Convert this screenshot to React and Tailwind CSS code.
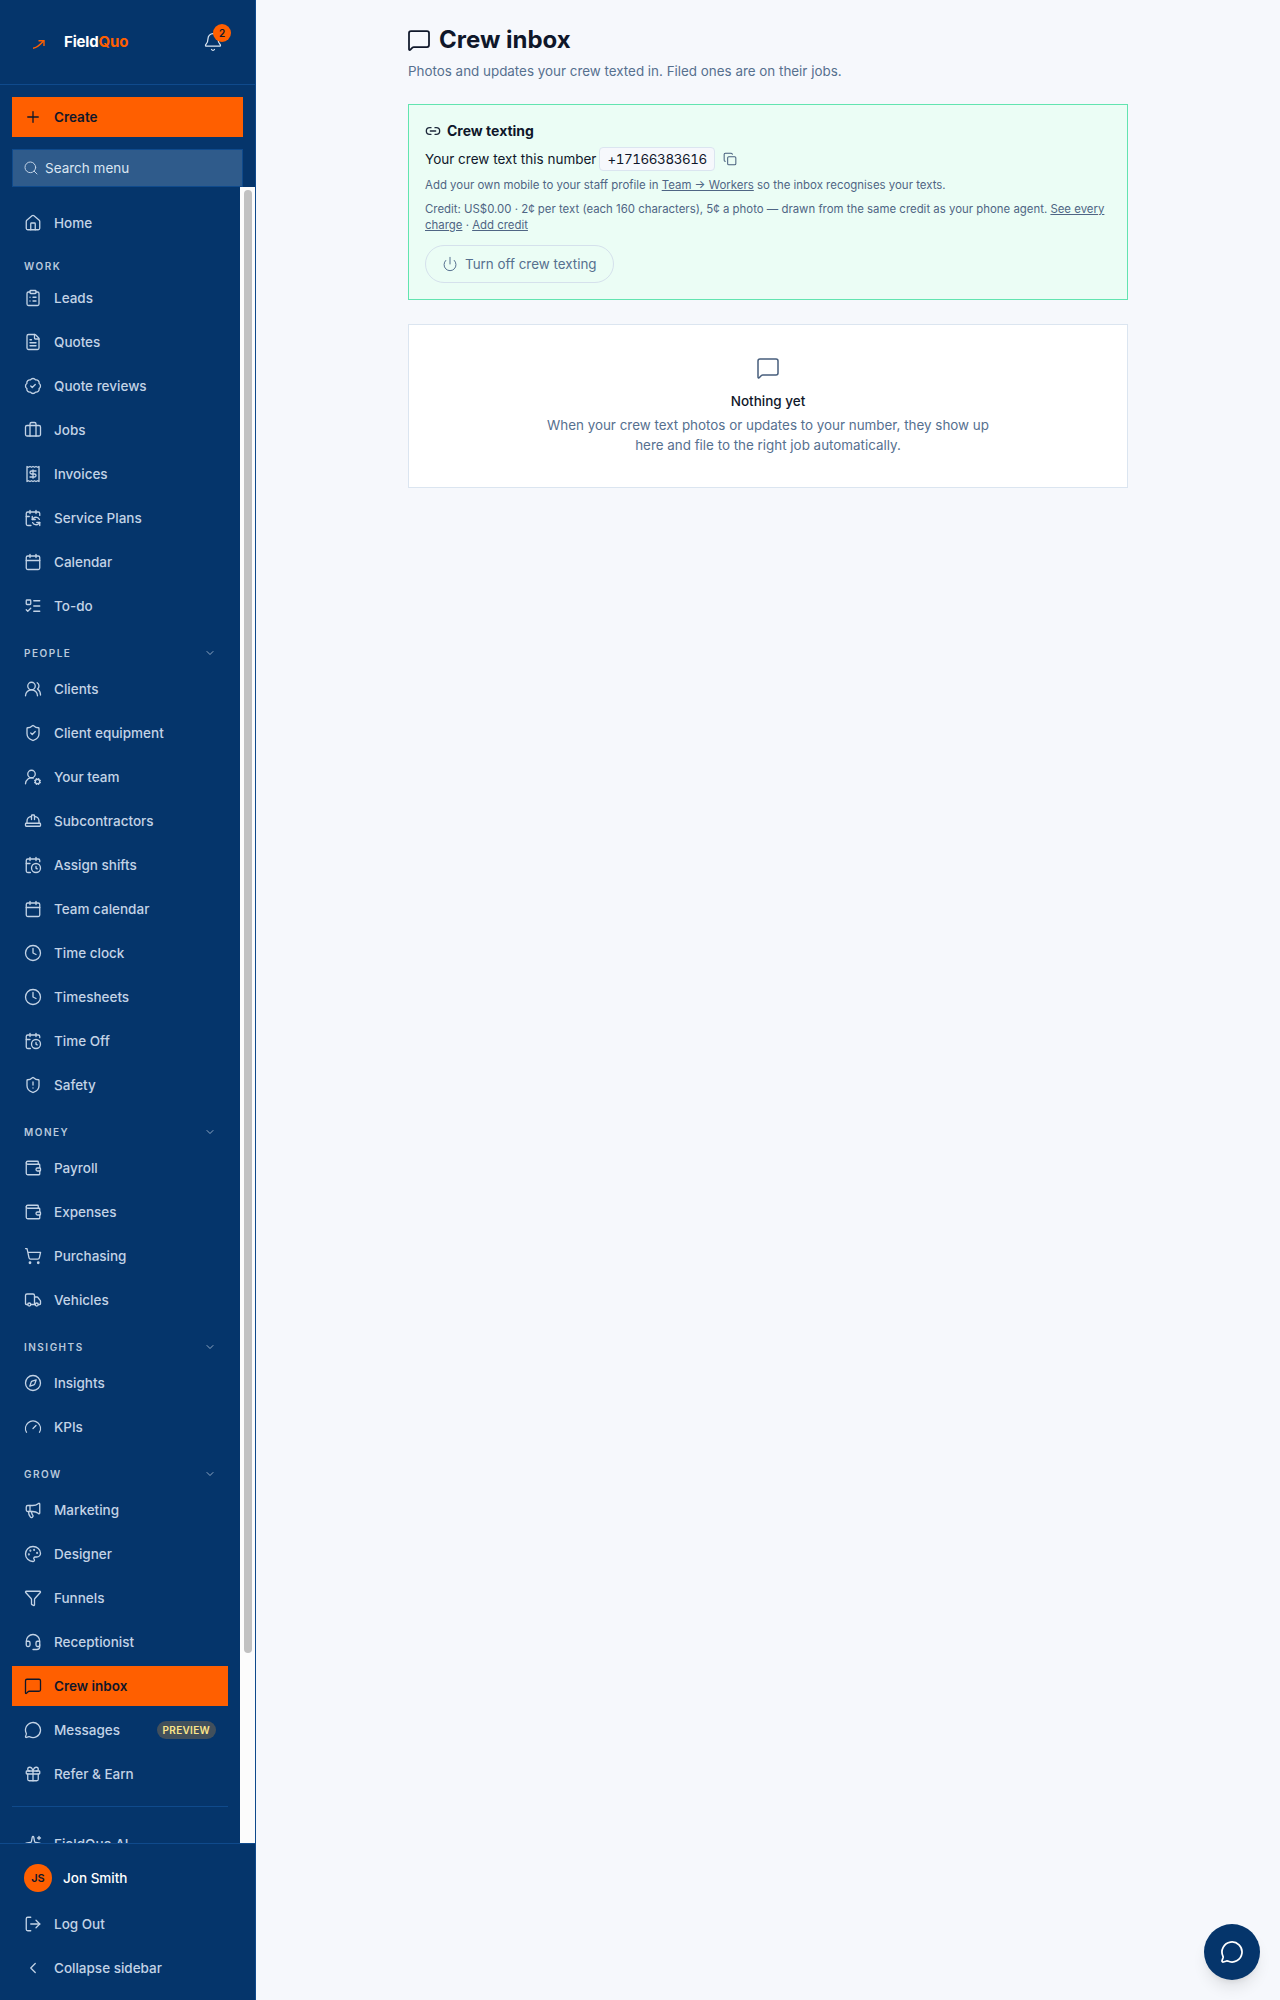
import React from 'react';
import {
    Bell, Plus, Search, House, ClipboardList, FileText, BadgeCheck, Briefcase, Receipt, CalendarSync, Calendar,
    ListTodo, ChevronDown, ChevronLeft, UsersRound, ShieldCheck, UserRoundCog, HardHat, CalendarClock, Clock,
    ShieldAlert, Wallet, ShoppingCart, Truck, Compass, Gauge, Megaphone, Palette, Funnel, Headset, MessageSquare,
    MessageCircle, Gift, Sparkles, LogOut, Link2, Copy, Power
} from 'lucide-react';

const sections = [
    { items: [{ name: 'Home', icon: House }] },
    {
        label: 'WORK',
        items: [
            { name: 'Leads', icon: ClipboardList },
            { name: 'Quotes', icon: FileText },
            { name: 'Quote reviews', icon: BadgeCheck },
            { name: 'Jobs', icon: Briefcase },
            { name: 'Invoices', icon: Receipt },
            { name: 'Service Plans', icon: CalendarSync },
            { name: 'Calendar', icon: Calendar },
            { name: 'To-do', icon: ListTodo }
        ]
    },
    {
        label: 'PEOPLE',
        collapsible: true,
        items: [
            { name: 'Clients', icon: UsersRound },
            { name: 'Client equipment', icon: ShieldCheck },
            { name: 'Your team', icon: UserRoundCog },
            { name: 'Subcontractors', icon: HardHat },
            { name: 'Assign shifts', icon: CalendarClock },
            { name: 'Team calendar', icon: Calendar },
            { name: 'Time clock', icon: Clock },
            { name: 'Timesheets', icon: Clock },
            { name: 'Time Off', icon: CalendarClock },
            { name: 'Safety', icon: ShieldAlert }
        ]
    },
    {
        label: 'MONEY',
        collapsible: true,
        items: [
            { name: 'Payroll', icon: Wallet },
            { name: 'Expenses', icon: Wallet },
            { name: 'Purchasing', icon: ShoppingCart },
            { name: 'Vehicles', icon: Truck }
        ]
    },
    {
        label: 'INSIGHTS',
        collapsible: true,
        items: [
            { name: 'Insights', icon: Compass },
            { name: 'KPIs', icon: Gauge }
        ]
    },
    {
        label: 'GROW',
        collapsible: true,
        items: [
            { name: 'Marketing', icon: Megaphone },
            { name: 'Designer', icon: Palette },
            { name: 'Funnels', icon: Funnel },
            { name: 'Receptionist', icon: Headset },
            { name: 'Crew inbox', icon: MessageSquare, active: true },
            { name: 'Messages', icon: MessageCircle, badge: 'PREVIEW' },
            { name: 'Refer & Earn', icon: Gift }
        ]
    }
];

function NavItem({ item }) {
    const Icon = item.icon;
    return (
        <a className={`flex items-center gap-3 h-10 px-3 text-[13.5px] ${item.active ? 'bg-[#ff5f00] text-[#0f172a] font-semibold' : 'text-[#c3d3e6] font-medium'}`}>
            <Icon className="w-[18px] h-[18px] shrink-0" strokeWidth={1.75} />
            <span className="flex-1">{item.name}</span>
            {item.badge && (
                <span className="rounded-full bg-[#42505c] text-[#fde68a] text-[10px] font-semibold tracking-[0.03em] leading-[18px] px-1.5">
                    {item.badge}
                </span>
            )}
        </a>
    );
}

function Sidebar() {
    return (
        <aside className="w-64 h-[2000px] shrink-0 bg-[#05356b] border-r border-[#0f4a8c] flex flex-col">
            {/* Logo */}
            <div className="h-[85px] shrink-0 border-b border-[#0f4a8c] flex items-center justify-between pl-[33px] pr-[32px]">
                <div className="flex items-center">
                    <svg className="w-[12px] h-[9px] mt-1" viewBox="0 0 12 9" fill="none" stroke="#ff5f00" strokeWidth="1.4">
                        <path d="M0 8.2 C3.5 8 6 6 10.5 1" />
                        <path d="M5.5 0.7 H11 V6" />
                    </svg>
                    <span className="ml-[19px] text-[15px] font-bold tracking-[-0.01em] text-white">
                        Field<span className="text-[#ff5f00]">Quo</span>
                    </span>
                </div>
                <div className="relative">
                    <Bell className="w-5 h-5 text-[#dbe6f2]" strokeWidth={1.5} />
                    <span className="absolute -top-[8px] left-[10px] w-[18px] h-[18px] rounded-full bg-[#ff5f00] text-[#0f172a] text-[10px] font-semibold flex items-center justify-center">2</span>
                </div>
            </div>

            {/* Create and search */}
            <div className="shrink-0 px-3 pt-3">
                <button className="w-full h-10 bg-[#ff5f00] flex items-center gap-3 px-3 text-[13.5px] font-semibold text-[#0f172a]">
                    <Plus className="w-[18px] h-[18px]" strokeWidth={1.75} />
                    Create
                </button>
                <div className="mt-3 h-[38px] bg-[#2f5b8b] border border-[#0f4a8c] flex items-center gap-1.5 px-[10px] text-[13.5px] text-[#dbe6f2]">
                    <Search className="w-4 h-4 text-[#c3d3e6]" strokeWidth={1.5} />
                    Search menu
                </div>
            </div>

            {/* Nav and its scrollbar */}
            <div className="flex-1 min-h-0 flex">
                <nav className="flex-1 min-w-0 overflow-hidden px-3 pt-4">
                    {sections.map(section => (
                        <div key={section.label || 'top'} className={section.label === 'WORK' ? 'mt-[15px]' : section.label ? 'mt-[19px]' : ''}>
                            {section.label && (
                                <div className={`h-4 flex items-center justify-between px-3 text-[10px] font-semibold tracking-[0.15em] text-[#b9c9dc] ${section.label === 'WORK' ? 'mb-1' : 'mb-2'}`}>
                                    {section.label}
                                    {section.collapsible && <ChevronDown className="w-3 h-3" strokeWidth={1.5} />}
                                </div>
                            )}
                            <div className="space-y-1">
                                {section.items.map(item => <NavItem key={item.name} item={item} />)}
                            </div>
                        </div>
                    ))}
                    <div className="mt-3 border-t border-[#0f4a8c] pt-[17px]">
                        <NavItem item={{ name: 'FieldQuo AI', icon: Sparkles }} />
                    </div>
                </nav>
                <div className="w-[15px] shrink-0 bg-[#fcfcfc] pt-[3px]">
                    <div className="w-2 h-[1463px] mx-auto rounded-full bg-[#c1c1c1]"></div>
                </div>
            </div>

            {/* Footer */}
            <div className="shrink-0 h-[157px] border-t border-[#0f4a8c] px-3 pt-[14px]">
                <div className="flex items-center gap-[11px] h-10 px-3 text-[13.5px] font-medium text-white">
                    <span className="w-7 h-7 rounded-full bg-[#ff5f00] text-[#0f172a] text-[11px] font-semibold flex items-center justify-center">JS</span>
                    Jon Smith
                </div>
                <div className="mt-[6px] space-y-1">
                    <NavItem item={{ name: 'Log Out', icon: LogOut }} />
                    <NavItem item={{ name: 'Collapse sidebar', icon: ChevronLeft }} />
                </div>
            </div>
        </aside>
    );
}

export default function App() {
    return (
        <div className="flex h-[2000px] bg-[#f6f8fc] relative overflow-hidden" style={{ fontFamily: 'Inter, sans-serif' }}>
            <Sidebar />
            <main className="flex-1 pt-6">
                <div className="w-[720px] mx-auto">
                    <div className="flex items-center gap-2 h-8 -ml-px">
                        <MessageSquare className="w-6 h-6 text-[#0f172a]" strokeWidth={1.75} />
                        <h1 className="text-2xl font-bold text-[#0f172a]">Crew inbox</h1>
                    </div>
                    <p className="mt-[5px] text-[13.4px] leading-5 text-[#56708f]">Photos and updates your crew texted in. Filed ones are on their jobs.</p>

                    <section className="mt-[23px] h-[196px] bg-[#ebfdf5] border border-[#62e4b0] p-4">
                        <div className="flex items-center gap-1.5 text-[14px] font-bold text-[#0f172a] leading-5">
                            <Link2 className="w-4 h-4 text-[#1e293b]" strokeWidth={2} />
                            Crew texting
                        </div>
                        <div className="mt-[6px] flex items-center text-[13.5px] text-[#0f172a]">
                            Your crew text this number
                            <span className="ml-[3px] h-6 px-[7px] flex items-center rounded bg-[#f6f8fc] border border-[#dbe5f0] text-[13.4px] tracking-[-0.03em] tabular-nums">+17166383616</span>
                            <Copy className="ml-2 w-3.5 h-3.5 text-[#475e7c]" strokeWidth={1.75} />
                        </div>
                        <p className="mt-[6px] text-[11.45px] leading-4 text-[#4f6584]">
                            Add your own mobile to your staff profile in <a className="underline">Team → Workers</a> so the inbox recognises your texts.
                        </p>
                        <p className="mt-2 text-[11.42px] leading-4 text-[#4f6584]">
                            Credit: US$0.00 · 2¢ per text (each 160 characters), 5¢ a photo — drawn from the same credit as your phone agent. <a className="underline">See every charge</a> · <a className="underline">Add credit</a>
                        </p>
                        <button className="mt-3 h-[38px] px-4 rounded-full border border-[#d5e1ec] flex items-center gap-[7px] text-[13.4px] text-[#56708f]">
                            <Power className="w-4 h-4" strokeWidth={1.5} />
                            Turn off crew texting
                        </button>
                    </section>

                    <section className="mt-6 h-[164px] bg-white border border-[#dbe5f0] flex flex-col items-center pt-[31px]">
                        <MessageSquare className="w-6 h-6 text-[#475e7c]" strokeWidth={1.5} />
                        <h3 className="mt-[11px] text-[13.5px] leading-5 font-medium text-[#0f172a]">Nothing yet</h3>
                        <p className="mt-1 max-w-md text-center text-[13.4px] leading-5 text-[#56708f]">
                            When your crew text photos or updates to your number, they show up here and file to the right job automatically.
                        </p>
                    </section>
                </div>
            </main>
            <button className="absolute right-5 bottom-5 w-14 h-14 rounded-full bg-[#05356b] shadow-lg flex items-center justify-center text-white">
                <MessageCircle className="w-6 h-6" strokeWidth={1.75} />
            </button>
        </div>
    );
}
